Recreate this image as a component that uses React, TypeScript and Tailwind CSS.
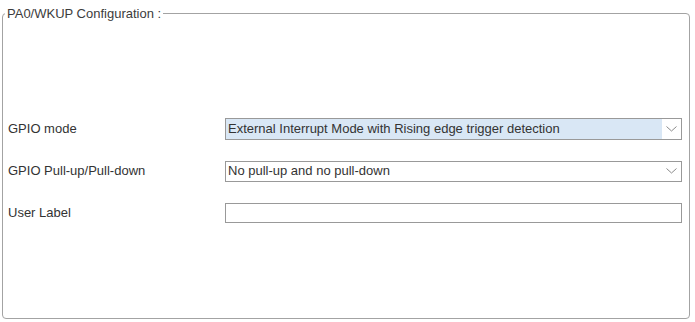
import React from "react";

const Chevron = () => (
  <svg width="11" height="6" viewBox="0 0 11 6" className="block">
    <path d="M0.5 0.5 L5.5 5 L10.5 0.5" fill="none" stroke="#8a8a8a" strokeWidth="1" />
  </svg>
);

export default function App() {
  const font = { fontFamily: '"Liberation Sans", Arial, sans-serif' };
  return (
    <div className="w-[695px] h-[322px] bg-white text-[13px] text-[#333333]" style={font}>
      <fieldset className="ml-[2px] mt-[6px] w-[688px] h-[313px] border border-[#a3a3a3] rounded-[4px] pl-[5px] pr-[7px]">
        <legend className="ml-[-3px] px-[2px] leading-[15px] text-[#3c3c3c]">PA0/WKUP Configuration :</legend>
        <div className="mt-[97px] flex flex-col gap-[20px]">
          <div className="flex items-center h-[22px]">
            <div className="w-[217px]">GPIO mode</div>
            <div className="flex-1 h-[22px] border border-[#999999] flex">
              <div className="flex-1 bg-[#d9e7f5] pl-[2px] flex items-center">
                External Interrupt Mode with Rising edge trigger detection
              </div>
              <div className="w-[19px] flex items-center justify-center bg-white">
                <Chevron />
              </div>
            </div>
          </div>
          <div className="flex items-center h-[22px]">
            <div className="w-[217px]">GPIO Pull-up/Pull-down</div>
            <div className="flex-1 h-[21px] border border-[#999999] flex">
              <div className="flex-1 pl-[2px] flex items-center">No pull-up and no pull-down</div>
              <div className="w-[19px] flex items-center justify-center">
                <Chevron />
              </div>
            </div>
          </div>
          <div className="flex items-center h-[21px]">
            <div className="w-[217px]">User Label</div>
            <div className="flex-1 h-[20px] border border-[#999999]" />
          </div>
        </div>
      </fieldset>
    </div>
  );
}
